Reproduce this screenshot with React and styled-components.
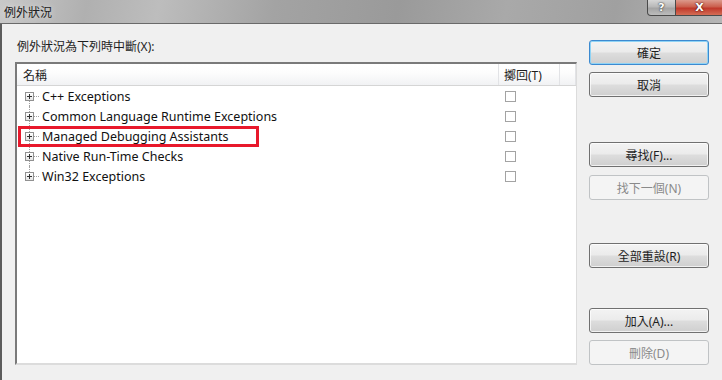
import styled, { createGlobalStyle, css } from 'styled-components';

const GlobalStyle = createGlobalStyle`
  html, body {
    margin: 0;
    padding: 0;
    background: #f0f0f0;
  }
  body {
    font-family: "Noto Sans", "Noto Sans CJK TC", sans-serif;
    font-size: 12px;
    color: #1e1e1e;
  }
`

const Window = styled.div`
  width: 722px;
  height: 380px;
  display: flex;
  flex-direction: column;
  overflow: hidden;
`

const TitleBar = styled.div`
  height: 23px;
  flex: none;
  display: flex;
  justify-content: space-between;
  align-items: flex-start;
  border-bottom: 1px solid #6a6a6a;
  background: linear-gradient(100deg, #c9c9c9 0%, #b0b0b0 12%, #bdbdbd 22%, #a3a3a3 38%, #9a9a9a 55%, #a9a9a9 70%, #a0a0a0 85%, #b5b5b5 100%);
`

const Title = styled.div`
  padding: 3px 0 0 4px;
  font-size: 12px;
  color: #202020;
  text-shadow: 0 0 6px rgba(255, 255, 255, 0.6);
`

const CaptionButtons = styled.div`
  display: flex;
  margin-right: -2px;
`

const CaptionButton = styled.div`
  height: 15px;
  display: flex;
  align-items: center;
  justify-content: center;
  border: 1px solid #4a4a4a;
  border-top: none;
  font-family: "DejaVu Sans", sans-serif;
  font-weight: bold;
  font-size: 11px;
  color: #fff;
  ${p => p.close ? css`
    width: 47px;
    border-left: none;
    border-radius: 0 0 4px 0;
    background: linear-gradient(#dc9a8c 0%, #cb5f4d 45%, #c0392b 55%, #d46d55 100%);
    text-shadow: 0 0 2px #4a1010, 0 0 1px #4a1010;
  ` : css`
    width: 27px;
    border-radius: 0 0 0 4px;
    background: linear-gradient(#d6d6d6 0%, #b8b8b8 45%, #a4a4a4 55%, #bcbcbc 100%);
    text-shadow: 0 0 2px #333, 0 0 1px #333;
  `}
`

const Body = styled.div`
  flex: 1;
  display: grid;
  grid-template-columns: 562px 120px;
  column-gap: 12px;
  padding-left: 13px;
  border-left: 2px solid #5c5c5c;
  background: #f0f0f0;
`

const LeftPane = styled.div`
  display: flex;
  flex-direction: column;
`

const Prompt = styled.div`
  padding: 15px 0 0 2px;
  line-height: 16px;
  height: 16px;
  color: #1e1e1e;
`

const ListBox = styled.div`
  margin-top: 7px;
  height: 303px;
  box-sizing: border-box;
  background: #fff;
  border-top: 2px solid #7a7a7a;
  border-left: 2px solid #7a7a7a;
  border-right: 1px solid #dcdcdc;
  border-bottom: 2px solid #dcdcdc;
  position: relative;
`

const Header = styled.div`
  display: grid;
  grid-template-columns: 482px 61px 1fr;
  height: 21px;
  border-bottom: 1px solid #d5d5d5;
  background: linear-gradient(#ffffff 0%, #fdfdfd 40%, #f1f2f4 100%);
`

const HeaderCell = styled.div`
  display: flex;
  align-items: center;
  padding-left: ${p => p.pad || 6}px;
  border-right: 1px solid #e2e3e6;
  color: #1e1e1e;
`

const Row = styled.div`
  display: grid;
  grid-template-columns: 482px 61px;
  height: 20px;
  align-items: center;
`

const NameCell = styled.div`
  position: relative;
  display: flex;
  align-items: center;
  height: 20px;
  padding-left: 8px;
  font-size: 12.5px;
  color: #111;
  &::before {
    content: '';
    position: absolute;
    left: 12px;
    top: ${p => p.first ? '10px' : '0'};
    bottom: ${p => p.last ? '10px' : '0'};
    border-left: 1px dotted #a0a0a0;
  }
`

const Expander = styled.span`
  position: relative;
  z-index: 1;
  width: 7px;
  height: 7px;
  border: 1px solid #919191;
  background: linear-gradient(#ffffff, #e4e4e4);
  display: flex;
  align-items: center;
  justify-content: center;
  flex: none;
  &::before, &::after {
    content: '';
    position: absolute;
    background: #333;
  }
  &::before { width: 5px; height: 1px; }
  &::after { width: 1px; height: 5px; }
`

const Connector = styled.span`
  width: 5px;
  margin: 0 3px 0 0;
  border-top: 1px dotted #a0a0a0;
  flex: none;
`

const CheckCell = styled.div`
  display: flex;
  align-items: center;
  padding-left: 6px;
`

const CheckBox = styled.span`
  width: 9px;
  height: 9px;
  border: 1px solid #a3a3a3;
  background: #fff;
`

const Highlight = styled.div`
  position: absolute;
  left: 1px;
  top: 62px;
  width: 235px;
  height: 15px;
  border: 3px solid #e8182b;
  pointer-events: none;
`

const RightPane = styled.div`
  display: flex;
  flex-direction: column;
  padding-top: 16px;
`

const Button = styled.div`
  height: 25px;
  box-sizing: border-box;
  margin-top: ${p => p.gap || 0}px;
  display: flex;
  align-items: center;
  justify-content: center;
  border-radius: 3px;
  font-size: 12px;
  ${p => p.disabled ? css`
    border: 1px solid #c0c3c5;
    background: #f4f4f4;
    color: #8a8a8a;
  ` : css`
    border: 1px solid ${p.primary ? '#3c8ad0' : '#707070'};
    background: linear-gradient(#f3f3f3 0%, #ebebeb 48%, #dddddd 52%, #cfcfcf 100%);
    color: #1e1e1e;
    box-shadow: inset 0 0 0 1px ${p.primary ? '#8fd3f5' : 'rgba(255,255,255,0.7)'};
  `}
`

const items = [
  'C++ Exceptions',
  'Common Language Runtime Exceptions',
  'Managed Debugging Assistants',
  'Native Run-Time Checks',
  'Win32 Exceptions',
]

const App = () => {
  return (
    <Window>
      <GlobalStyle />
      <TitleBar>
        <Title>例外狀況</Title>
        <CaptionButtons>
          <CaptionButton>?</CaptionButton>
          <CaptionButton close>X</CaptionButton>
        </CaptionButtons>
      </TitleBar>
      <Body>
        <LeftPane>
          <Prompt>例外狀況為下列時中斷(X):</Prompt>
          <ListBox>
            <Header>
              <HeaderCell pad={6}>名稱</HeaderCell>
              <HeaderCell pad={5}>擲回(T)</HeaderCell>
              <HeaderCell />
            </Header>
            {items.map((name, i) => (
              <Row key={name}>
                <NameCell first={i === 0} last={i === items.length - 1}>
                  <Expander />
                  <Connector />
                  {name}
                </NameCell>
                <CheckCell>
                  <CheckBox />
                </CheckCell>
              </Row>
            ))}
            <Highlight />
          </ListBox>
        </LeftPane>
        <RightPane>
          <Button primary>確定</Button>
          <Button gap={7}>取消</Button>
          <Button gap={45}>尋找(F)...</Button>
          <Button gap={8} disabled>找下一個(N)</Button>
          <Button gap={43}>全部重設(R)</Button>
          <Button gap={40}>加入(A)...</Button>
          <Button gap={7} disabled>刪除(D)</Button>
        </RightPane>
      </Body>
    </Window>
  )
}

export default App;
